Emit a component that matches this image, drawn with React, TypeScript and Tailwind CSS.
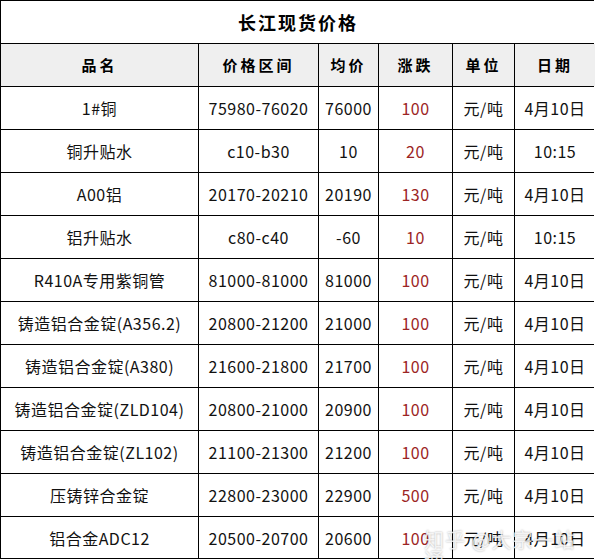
const rows: [string, string, string, string, string, string][] = [
  ["1#铜", "75980-76020", "76000", "100", "元/吨", "4月10日"],
  ["铜升贴水", "c10-b30", "10", "20", "元/吨", "10:15"],
  ["A00铝", "20170-20210", "20190", "130", "元/吨", "4月10日"],
  ["铝升贴水", "c80-c40", "-60", "10", "元/吨", "10:15"],
  ["R410A专用紫铜管", "81000-81000", "81000", "100", "元/吨", "4月10日"],
  ["铸造铝合金锭(A356.2)", "20800-21200", "21000", "100", "元/吨", "4月10日"],
  ["铸造铝合金锭(A380)", "21600-21800", "21700", "100", "元/吨", "4月10日"],
  ["铸造铝合金锭(ZLD104)", "20800-21000", "20900", "100", "元/吨", "4月10日"],
  ["铸造铝合金锭(ZL102)", "21100-21300", "21200", "100", "元/吨", "4月10日"],
  ["压铸锌合金锭", "22800-23000", "22900", "500", "元/吨", "4月10日"],
  ["铝合金ADC12", "20500-20700", "20600", "100", "元/吨", "4月10日"],
];

const headers = ["品名", "价格区间", "均价", "涨跌", "单位", "日期"];

export default function App() {
  return (
    <div className="relative w-[596px] h-[559px] bg-white overflow-hidden font-['Noto_Sans_CJK_SC',sans-serif] text-black">
      <div className="grid w-[594px] grid-cols-[197px_119px_59px_73px_61px_80px] gap-px bg-black border border-black">
        <div className="col-span-6 h-[42px] bg-white flex items-center justify-center text-[18px] font-bold tracking-[2px]">
          长江现货价格
        </div>
        {headers.map((h) => (
          <div
            key={h}
            className="h-[42px] bg-[#efefef] flex items-center justify-center text-[15px] font-bold tracking-[3px]"
          >
            {h}
          </div>
        ))}
        {rows.map((r, i) =>
          r.map((c, j) => (
            <div
              key={i + "-" + j}
              className={
                "bg-white flex items-center justify-center text-[16px] leading-none tracking-[0.5px] " +
                (i === rows.length - 1 ? "h-[41px] " : "h-[42px] ") +
                (j === 3 ? "text-[#9c2424]" : "text-[#111]")
              }
            >
              {c}
            </div>
          ))
        )}
      </div>
      <div className="absolute left-[424px] top-[530px] text-[20px] leading-none text-white/80 tracking-[1px] [text-shadow:0_0_2px_rgba(0,0,0,0.35)] pointer-events-none">
        知乎 @大宗一站通
      </div>
    </div>
  );
}
